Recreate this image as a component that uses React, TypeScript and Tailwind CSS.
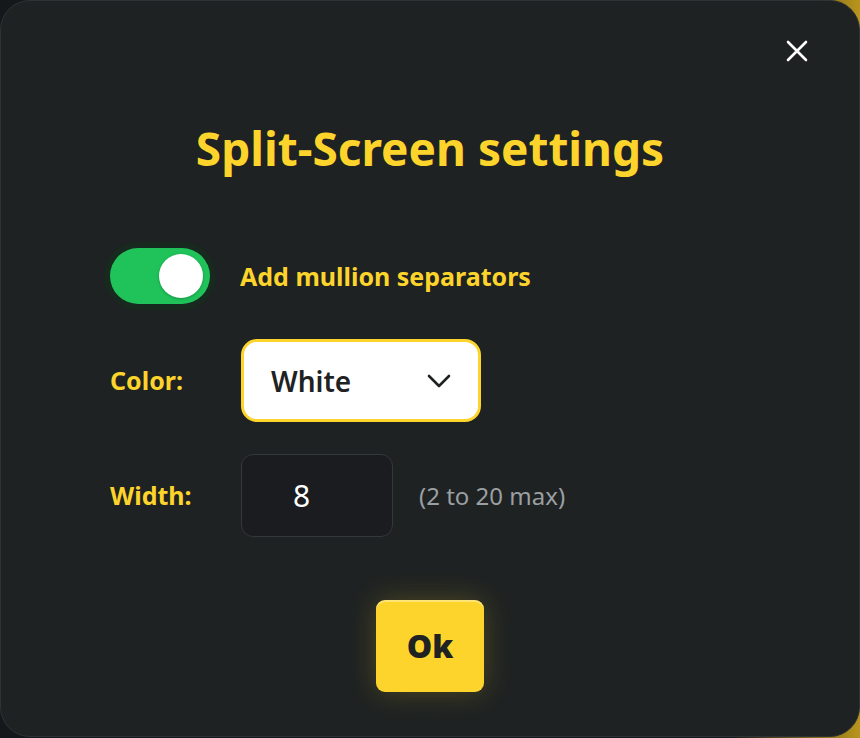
export default function App() {
  return (
    <div className="h-[738px] w-[860px] overflow-hidden bg-[linear-gradient(90deg,#14181a_0%,#14181a_85%,#b8951c_100%)] font-['Noto_Sans',sans-serif]">
      <div className="relative flex h-[737px] w-[860px] flex-col rounded-[30px] border border-[#2e3335] bg-[#1e2222]">
        {/* Close */}
        <button className="absolute right-[51px] top-[39px] text-white">
          <svg width="22" height="22" viewBox="0 0 22 22" fill="none" stroke="currentColor" strokeWidth="2.6" strokeLinecap="round">
            <path d="M2 2 L20 20 M20 2 L2 20" />
          </svg>
        </button>

        {/* Title */}
        <h2 className="mt-[118px] text-center text-[46px] font-bold leading-[58px] text-[#fdd42b]">
          Split-Screen settings
        </h2>

        <div className="px-[109px]">
          {/* Toggle */}
          <div className="mt-[71px] flex items-center">
            <div className="flex h-[56px] w-[100px] items-center justify-end rounded-full bg-[#1fc35a] pr-[7px] shadow-[0_0_0_6px_#18291f]">
              <div className="h-[44px] w-[44px] rounded-full bg-white shadow-[0_1px_3px_rgba(0,0,0,0.25)]" />
            </div>
            <span className="ml-[30px] text-[25px] font-bold leading-[34px] text-[#fdd42b]">Add mullion separators</span>
          </div>

          {/* Color */}
          <div className="mt-[35px] flex items-center">
            <span className="w-[131px] text-[25px] font-bold text-[#fdd42b]">Color:</span>
            <div className="flex h-[83px] w-[240px] items-center justify-between rounded-[16px] border-[3px] border-[#fdd42b] bg-white pl-[27px] pr-[27px]">
              <span className="text-[28px] font-semibold text-[#1e2222]">White</span>
              <svg width="24" height="14" viewBox="0 0 24 14" fill="none" stroke="#1e2222" strokeWidth="2.6" strokeLinecap="round" strokeLinejoin="round">
                <path d="M2 2 L12 12 L22 2" />
              </svg>
            </div>
          </div>

          {/* Width */}
          <div className="mt-[32px] flex items-center">
            <span className="w-[131px] text-[25px] font-bold text-[#fdd42b]">Width:</span>
            <div className="flex h-[83px] w-[152px] items-center rounded-[12px] border border-[#34383b] bg-[#1a1c20] pl-[51px]">
              <span className="text-[30px] text-white">8</span>
            </div>
            <span className="ml-[26px] text-[24px] text-[#9a9fa1]">(2 to 20 max)</span>
          </div>
        </div>

        {/* Ok */}
        <div className="mt-[63px] flex justify-center">
          <button className="h-[92px] w-[108px] rounded-[9px] bg-[#fdd42b] text-[32px] font-black text-[#1e2222] shadow-[inset_0_2px_0_rgba(255,255,255,0.35),0_0_28px_rgba(253,212,43,0.22)]">
            Ok
          </button>
        </div>
      </div>
    </div>
  )
}
